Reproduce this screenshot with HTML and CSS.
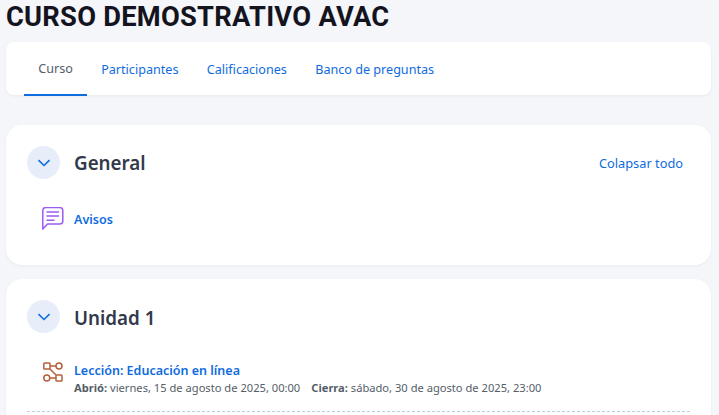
FILE: index.html
```html
<!DOCTYPE html>
<html>
<head>
  <title>Curso demostrativo AVAC</title>
  <link rel="stylesheet" href="styles.css">
</head>
<body>
  <h1 class="course-title">CURSO DEMOSTRATIVO AVAC</h1>

  <nav class="tabs">
    <a class="tab active">Curso</a>
    <a class="tab">Participantes</a>
    <a class="tab">Calificaciones</a>
    <a class="tab">Banco de preguntas</a>
  </nav>

  <section class="section section-general">
    <div class="section-head">
      <span class="toggle">
        <svg width="14" height="8" viewBox="0 0 14 8"><path d="M1.5 1.2 7 6.5l5.5-5.3" fill="none" stroke="#0f6cde" stroke-width="1.6"/></svg>
      </span>
      <h2 class="section-title">General</h2>
      <a class="collapse-all">Colapsar todo</a>
    </div>
    <div class="activity activity-forum">
      <span class="activity-icon">
        <svg width="24" height="24" viewBox="0 0 24 24" fill="none" stroke="#9b5cf6" stroke-width="1.5" stroke-linecap="round" stroke-linejoin="round">
          <path d="M2.8 22V3.5a3 3 0 0 1 3-3h14a3 3 0 0 1 3 3V14a3 3 0 0 1-3 3H7.500z"/>
          <path d="M7 5h11.500M7 9h11.500M7 13.200h7"/>
        </svg>
      </span>
      <a class="activity-name">Avisos</a>
    </div>
  </section>

  <section class="section section-unit">
    <div class="section-head">
      <span class="toggle">
        <svg width="14" height="8" viewBox="0 0 14 8"><path d="M1.5 1.2 7 6.5l5.5-5.3" fill="none" stroke="#0f6cde" stroke-width="1.6"/></svg>
      </span>
      <h2 class="section-title">Unidad 1</h2>
    </div>
    <div class="activity activity-lesson">
      <span class="activity-icon">
        <svg width="22" height="22" viewBox="0 0 22 22" fill="none" stroke="#b5603a" stroke-width="1.5">
          <rect x="1.800" y="2" width="6.200" height="6" rx="0.800"/>
          <circle cx="17" cy="5" r="3"/>
          <circle cx="4.800" cy="17" r="3"/>
          <rect x="14" y="14" width="6" height="6" rx="0.800"/>
          <path d="M8 5h6M7.800 17H14M8 8l6 6"/>
        </svg>
      </span>
      <div class="activity-body">
        <a class="activity-name">Lección: Educación en línea</a>
        <div class="dates">
          <span><b>Abrió:</b> viernes, 15 de agosto de 2025, 00:00</span>
          <span><b>Cierra:</b> sábado, 30 de agosto de 2025, 23:00</span>
        </div>
      </div>
    </div>
    <div class="divider"></div>
  </section>
</body>
</html>
```

FILE: styles.css
```css
html, body {
  height: 100%;
  overflow: hidden;
}

body {
  margin: 0;
  padding: 0 8px 0 6px;
  box-sizing: border-box;
  background-color: #f5f6fa;
  font-family: "Noto Sans", "Open Sans", sans-serif;
  color: #343a40;
}

a {
  color: #0f6cde;
  text-decoration: none;
}

.course-title {
  margin: 0;
  height: 42px;
  font-family: Roboto, "Noto Sans", sans-serif;
  font-size: 27.3px;
  letter-spacing: 0.25px;
  line-height: 34px;
  font-weight: 700;
  color: #14141f;
}

.tabs {
  display: flex;
  height: 53px;
  padding: 0 18px;
  background: white;
  border-radius: 8px;
  box-shadow: 0 1px 3px rgba(0, 0, 0, 0.06);
  margin-bottom: 30px;
}

.tab {
  display: flex;
  align-items: center;
  padding: 0 14.2px;
  font-size: 12.6px;
  height: 54px;
  box-sizing: border-box;
}

.tab.active {
  color: #555e68;
  border-bottom: 2px solid #0f6cde;
}

.section {
  background: white;
  border-radius: 16px;
  box-shadow: 0 1px 3px rgba(0, 0, 0, 0.05);
  padding: 21px 21px 0;
  margin-bottom: 14px;
}

.section-general {
  height: 140px;
  box-sizing: border-box;
}

.section-unit {
  height: 136px;
  box-sizing: border-box;
  margin-bottom: 0;
  border-radius: 16px 16px 0 0;
}

.section-head {
  display: flex;
  align-items: center;
  height: 33px;
}

.toggle {
  display: flex;
  align-items: center;
  justify-content: center;
  width: 33px;
  height: 33px;
  border-radius: 50%;
  background: #e7eefa;
  margin-right: 14px;
}

.section-title {
  margin: 0;
  flex: 1;
  font-size: 18.8px;
  font-weight: 600;
  color: #32394a;
}

.section-unit .section-title {
  padding-top: 2px;
}

.collapse-all {
  font-size: 12.8px;
  margin-right: 7px;
}

.activity {
  display: flex;
  align-items: flex-start;
  margin-top: 28px;
  padding-left: 13px;
}

.activity-icon {
  display: flex;
  width: 34px;
}

.activity-name {
  display: block;
  font-size: 12.5px;
  font-weight: 600;
  line-height: 16px;
}

.activity-forum .activity-name {
  margin-top: 5px;
}

.activity-lesson {
  margin-top: 30px;
}

.activity-lesson .activity-icon {
  box-sizing: border-box;
  padding-left: 2px;
  margin-top: -2px;
}

.dates {
  display: flex;
  gap: 11px;
  margin-top: 1px;
  font-size: 11.15px;
  line-height: 16px;
  color: #555e68;
}

.dates b {
  font-weight: 700;
}

.divider {
  margin-top: 15px;
  border-bottom: 1px dashed #c8ccd0;
}
```
